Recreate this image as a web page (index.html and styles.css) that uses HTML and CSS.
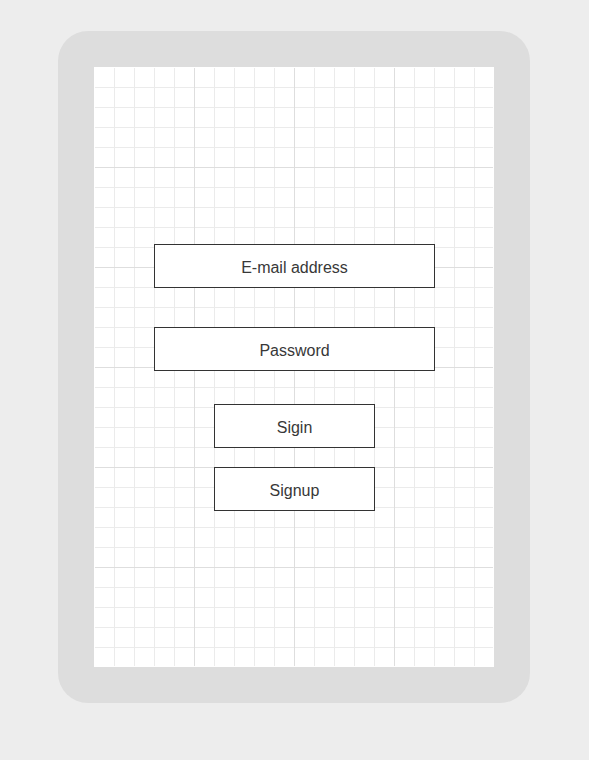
FILE: index.html
```html
<!DOCTYPE html>
<html lang="en">

<head>
    <meta charset="UTF-8">
    <meta name="viewport" content="width=device-width, initial-scale=1.0">
    <title>Login</title>
    <link rel="stylesheet" href="styles.css">
</head>

<body>
    <div class="device">
        <div class="screen">
            <div class="field field-email">E-mail address</div>
            <div class="field field-password">Password</div>
            <div class="btn btn-signin">Sigin</div>
            <div class="btn btn-signup">Signup</div>
        </div>
    </div>
</body>

</html>
```

FILE: styles.css
```css
body {
    font-family: 'Liberation Sans', Arial, sans-serif;
    margin: 0;
    padding: 31px 0 0;
    background-color: #ededed;
    color: #333;
}

.device {
    width: 472px;
    height: 672px;
    margin: 0 0 0 58px;
    box-sizing: border-box;
    padding: 36px;
    background-color: #dddddd;
    border-radius: 30px;
}

.screen {
    width: 400px;
    height: 600px;
    box-sizing: border-box;
    border: 1px solid #fff;
    padding-top: 176px;
    display: flex;
    flex-direction: column;
    align-items: flex-start;
    background-color: #fff;
    background-clip: padding-box;
    background-image:
        linear-gradient(to right, transparent 99px, #dedede 99px),
        linear-gradient(to bottom, transparent 99px, #dedede 99px),
        linear-gradient(to right, transparent 19px, #ebebeb 19px),
        linear-gradient(to bottom, transparent 19px, #ebebeb 19px);
    background-size: 100px 100px, 100px 100px, 20px 20px, 20px 20px;
}

.field,
.btn {
    box-sizing: border-box;
    height: 44px;
    padding-top: 4px;
    border: 1px solid #333;
    background-color: #fff;
    display: flex;
    align-items: center;
    justify-content: center;
    font-size: 16px;
    color: #383838;
}

.field {
    width: 281px;
    margin-left: 59px;
}

.field-password {
    margin-top: 39px;
}

.btn {
    width: 161px;
    margin-left: 119px;
}

.btn-signin {
    margin-top: 33px;
}

.btn-signup {
    margin-top: 19px;
}
```
